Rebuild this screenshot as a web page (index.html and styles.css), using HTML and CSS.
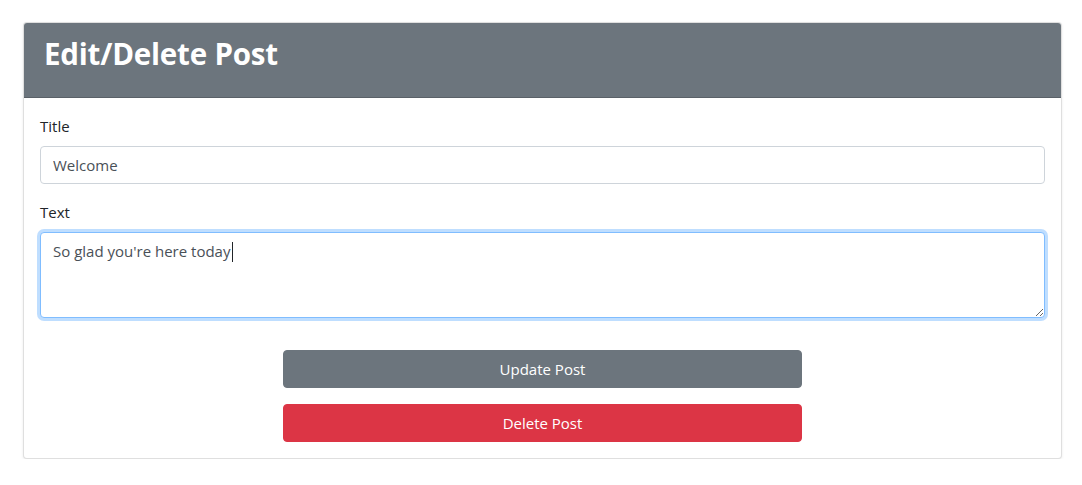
FILE: index.html
```html
<!DOCTYPE html>
<html lang="en">
<head>
<meta charset="utf-8">
<title>Edit/Delete Post</title>
<link rel="stylesheet" href="styles.css">
</head>
<body>
<div class="page">
  <div class="card">
    <div class="card-header">
      <h1 class="card-title">Edit/Delete Post</h1>
    </div>
    <form class="card-body">
      <div class="form-group">
        <label class="form-label" for="title">Title</label>
        <input class="form-control" id="title" type="text" value="Welcome">
      </div>
      <div class="form-group">
        <label class="form-label" for="text">Text</label>
        <div class="textarea-wrap">
          <textarea class="form-control textarea is-focused" id="text" rows="3">So glad you're here today</textarea>
          <span class="caret"></span>
        </div>
      </div>
      <div class="actions">
        <button type="button" class="btn btn-secondary">Update Post</button>
        <button type="button" class="btn btn-danger">Delete Post</button>
      </div>
    </form>
  </div>
</div>
</body>
</html>
```
FILE: styles.css
```css
* { box-sizing: border-box; }
html, body { margin: 0; padding: 0; background: #fff; }
body {
  font-family: "Open Sans", "Noto Sans", "Liberation Sans", sans-serif;
  font-size: 15px;
  line-height: 24px;
  color: #212529;
}
.page {
  padding: 22px 20px 0 23px;
}
.card {
  width: 1039px;
  border: 1px solid rgba(0,0,0,.125);
  border-radius: 4px;
  box-shadow: 0 1px 3px rgba(0,0,0,.08);
  background: #fff;
  overflow: hidden;
}
.card-header {
  background: #6c757d;
  border-bottom: 1px solid #5a6168;
  padding: 11px 20px 0 20px;
  height: 75px;
}
.card-title {
  margin: 0;
  color: #fff;
  font-size: 29.5px;
  font-weight: 700;
  line-height: 40px;
  letter-spacing: -0.2px;
}
.card-body {
  display: flex;
  flex-direction: column;
  padding: 16px 16px 16px 16px;
  margin: 0;
}
.form-group {
  display: flex;
  flex-direction: column;
  margin-bottom: 16px;
}
.form-label {
  display: block;
  margin-bottom: 8px;
  line-height: 24px;
  font-size: 15px;
  color: #212529;
}
.form-control {
  display: block;
  width: 100%;
  height: 38px;
  padding: 6px 12px;
  font-family: inherit;
  font-size: 15px;
  line-height: 24px;
  color: #495057;
  background: #fff;
  border: 1px solid #ced4da;
  border-radius: 4px;
  outline: none;
}
.textarea-wrap {
  position: relative;
}
.textarea {
  height: 86px;
  resize: vertical;
}
.caret {
  position: absolute;
  left: 192px;
  top: 10px;
  width: 1px;
  height: 20px;
  background: #212529;
}
.is-focused {
  border-color: #80bdff;
  box-shadow: 0 0 0 3px rgba(0,123,255,.25);
}
.actions {
  display: flex;
  flex-direction: column;
  align-items: center;
  gap: 16px;
  margin-top: 16px;
}
.btn {
  width: 519px;
  height: 38px;
  border: 1px solid transparent;
  border-radius: 4px;
  font-family: inherit;
  font-size: 15px;
  line-height: 24px;
  color: #fff;
  padding: 6px 12px;
  cursor: pointer;
}
.btn-secondary { background: #6c757d; border-color: #6c757d; }
.btn-danger { background: #dc3545; border-color: #dc3545; }
```
